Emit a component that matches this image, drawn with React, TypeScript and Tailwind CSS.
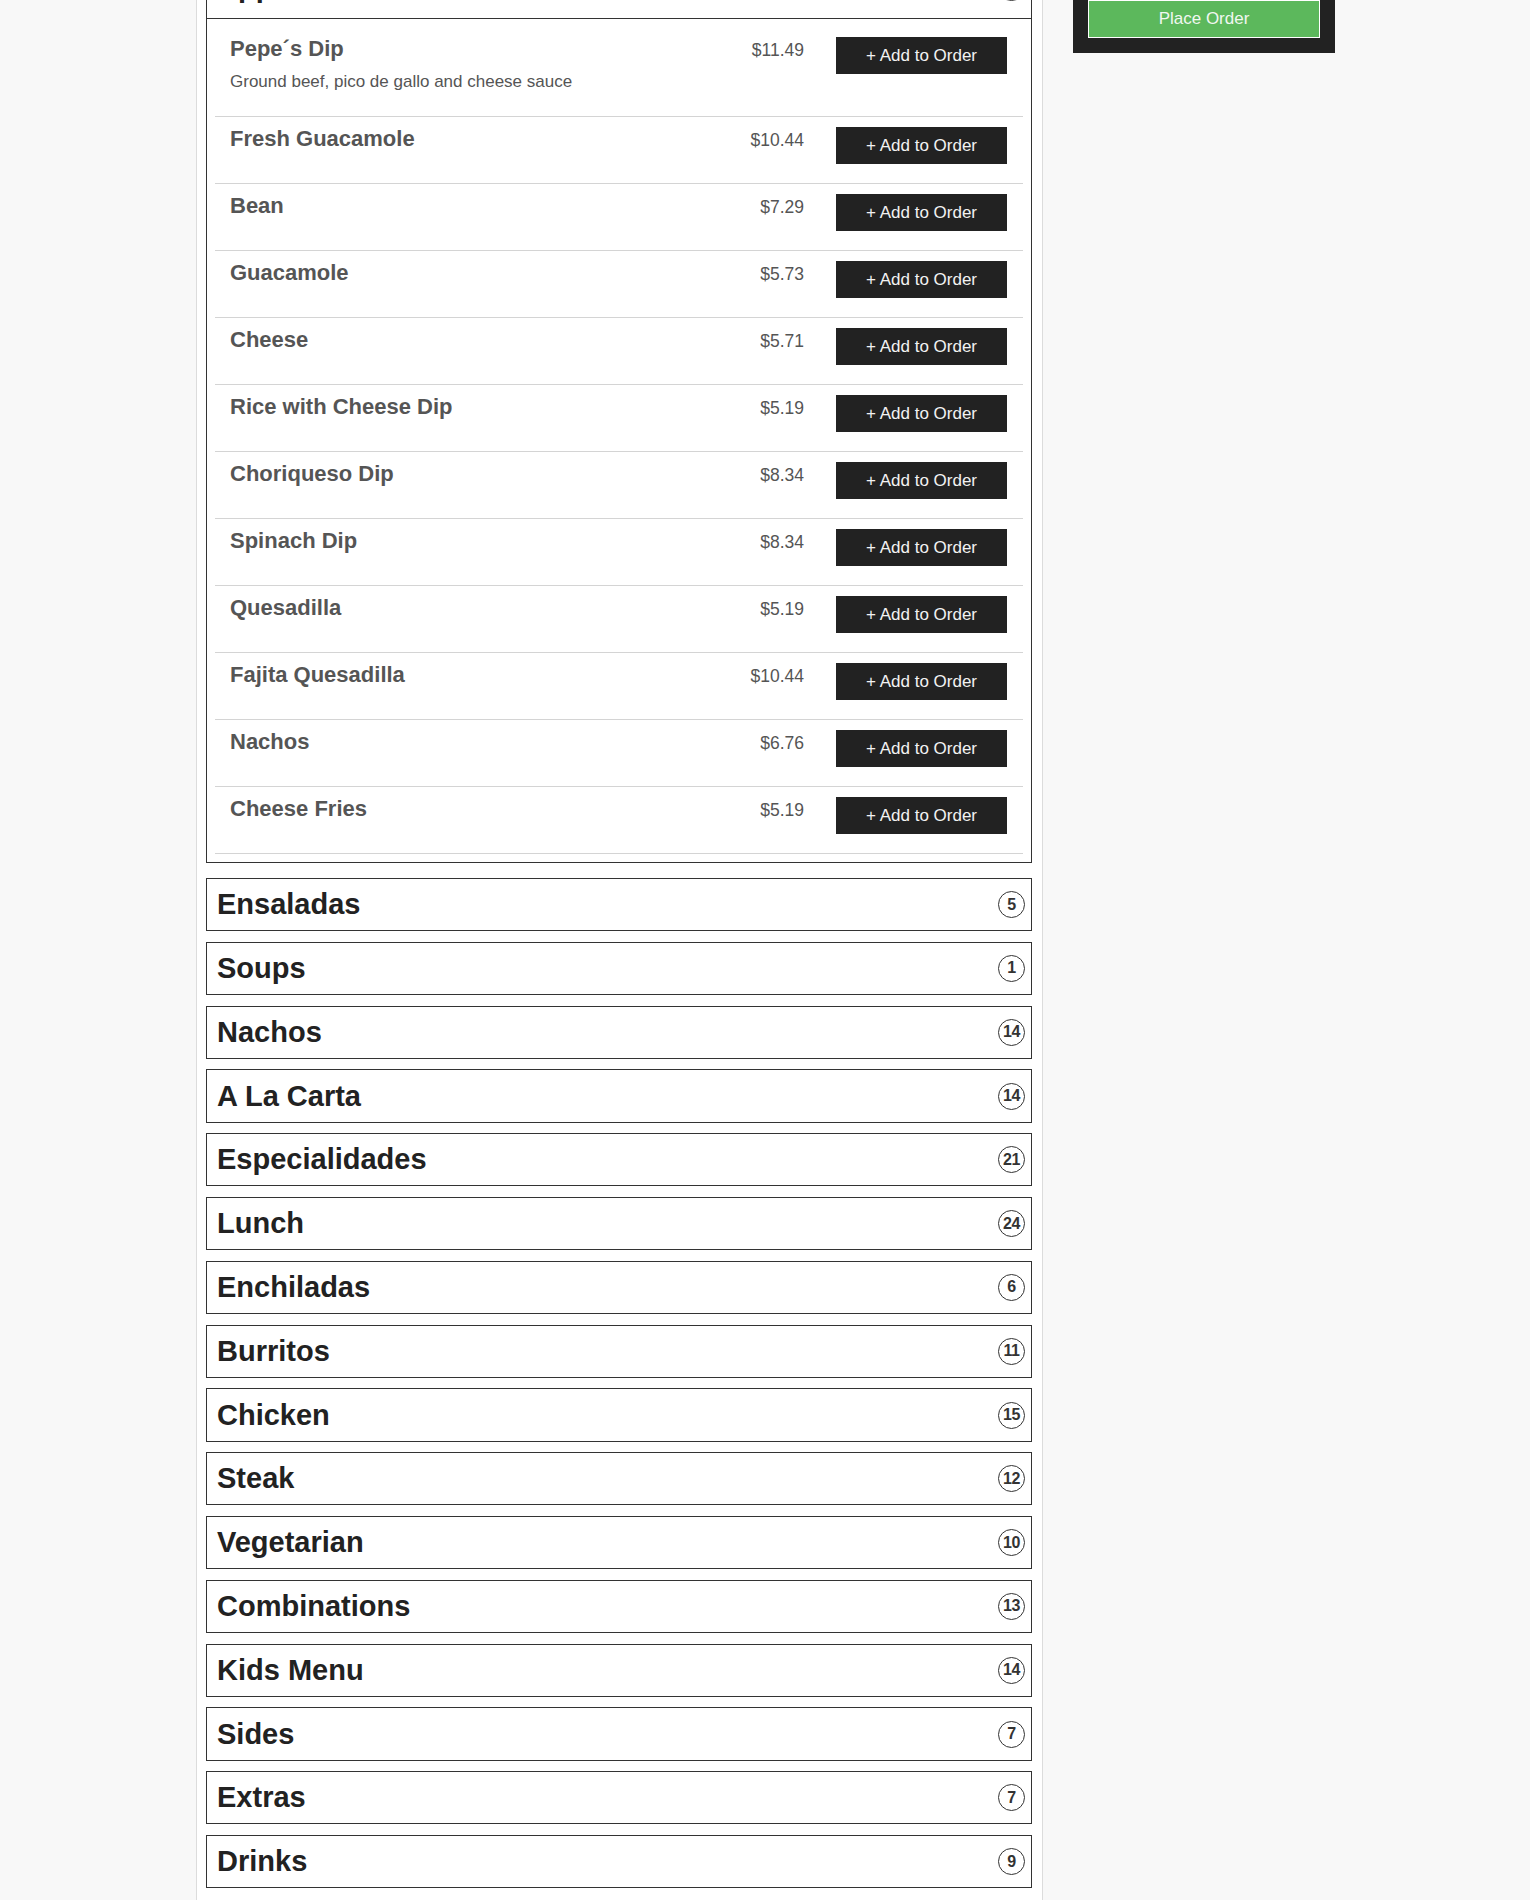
import React from 'react';

interface MenuItem {
  name: string;
  price: string;
  description?: string;
}

const appetizers: MenuItem[] = [
  { name: 'Pepe´s Dip', price: '$11.49', description: 'Ground beef, pico de gallo and cheese sauce' },
  { name: 'Fresh Guacamole', price: '$10.44' },
  { name: 'Bean', price: '$7.29' },
  { name: 'Guacamole', price: '$5.73' },
  { name: 'Cheese', price: '$5.71' },
  { name: 'Rice with Cheese Dip', price: '$5.19' },
  { name: 'Choriqueso Dip', price: '$8.34' },
  { name: 'Spinach Dip', price: '$8.34' },
  { name: 'Quesadilla', price: '$5.19' },
  { name: 'Fajita Quesadilla', price: '$10.44' },
  { name: 'Nachos', price: '$6.76' },
  { name: 'Cheese Fries', price: '$5.19' },
];

const categories: { name: string; count: number }[] = [
  { name: 'Ensaladas', count: 5 },
  { name: 'Soups', count: 1 },
  { name: 'Nachos', count: 14 },
  { name: 'A La Carta', count: 14 },
  { name: 'Especialidades', count: 21 },
  { name: 'Lunch', count: 24 },
  { name: 'Enchiladas', count: 6 },
  { name: 'Burritos', count: 11 },
  { name: 'Chicken', count: 15 },
  { name: 'Steak', count: 12 },
  { name: 'Vegetarian', count: 10 },
  { name: 'Combinations', count: 13 },
  { name: 'Kids Menu', count: 14 },
  { name: 'Sides', count: 7 },
  { name: 'Extras', count: 7 },
  { name: 'Drinks', count: 9 },
];

const CountBadge: React.FC<{ count: number }> = ({ count }) => (
  <span className="flex h-[27px] w-[27px] items-center justify-center rounded-full border border-[#333] text-[16px] font-bold leading-none tracking-[-0.5px] text-[#333]">
    {count}
  </span>
);

const CategoryHeader: React.FC<{ name: string; count: number; raised?: boolean }> = ({ name, count, raised }) => (
  <div className={`flex h-full items-center justify-between pl-[10px] pr-[6px] ${raised ? 'pb-[12px]' : ''}`}>
    <h2 className="text-[29px] font-bold leading-none text-[#222]">{name}</h2>
    <CountBadge count={count} />
  </div>
);

const ItemRow: React.FC<{ item: MenuItem }> = ({ item }) => (
  <div className="flex items-start border-b border-[#d4d4d4] pl-[15px] pr-[16px] pt-[10px] pb-[19px]">
    <div className="flex-1">
      <h3 className="text-[22px] font-bold leading-[24px] text-[#555]">{item.name}</h3>
      {item.description && (
        <p className="mt-[11px] mb-[5px] text-[17px] leading-[20px] text-[#555]">{item.description}</p>
      )}
    </div>
    <span className="pt-[2px] text-[17.5px] leading-[22px] text-[#555]">{item.price}</span>
    <button className="ml-[32px] h-[37px] w-[171px] bg-[#222] text-[17px] text-[#f2f2f2]">
      + Add to Order
    </button>
  </div>
);

export default function App() {
  return (
    <div className="min-h-[1900px] overflow-hidden bg-[#f8f8f8] font-['Liberation_Sans',Arial,sans-serif]">
      <div className="flex items-start pl-[196px]">
        <main className="min-h-[1900px] w-[847px] border-x border-[#dcdcdc] bg-white pl-[9px] pr-[10px]">
          <div className="-mt-[33px] flex flex-col">
            <section className="mb-[15px] border border-[#333]">
              <div className="h-[51px] border-b border-[#333]">
                <CategoryHeader name="Appetizers" count={appetizers.length} raised />
              </div>
              <div className="mx-[8px] my-[8px]">
                {appetizers.map((item) => (
                  <ItemRow key={item.name} item={item} />
                ))}
              </div>
            </section>
            <div className="flex flex-col gap-[10.5px]">
              {categories.map((c) => (
                <section key={c.name} className="h-[53.3px] border border-[#333]">
                  <CategoryHeader name={c.name} count={c.count} />
                </section>
              ))}
            </div>
          </div>
        </main>
        <aside className="ml-[30px] w-[262px] bg-[#222] px-[15px] pb-[15px]">
          <button className="h-[38px] w-full border border-white bg-[#5cb85c] text-[17px] text-[#f0f7f0]">
            Place Order
          </button>
        </aside>
      </div>
    </div>
  );
}
